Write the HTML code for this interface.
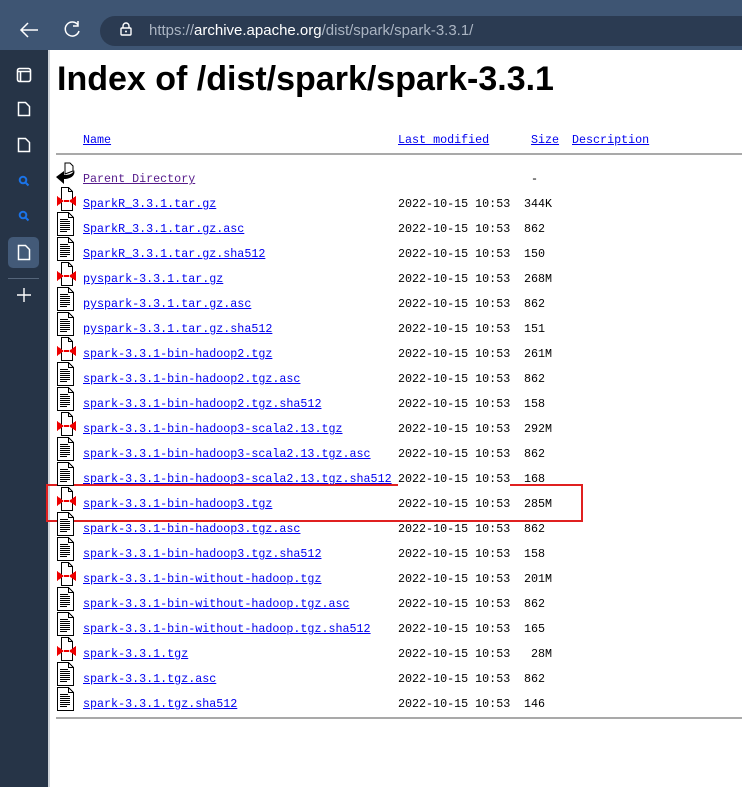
<!DOCTYPE html>
<html><head><meta charset="utf-8"><style>
*{margin:0;padding:0;box-sizing:border-box}
body{width:742px;height:787px;overflow:hidden;background:#fff;position:relative;font-family:"Liberation Mono","Noto Sans CJK SC",monospace;font-size:11.7px}
#top{position:absolute;left:0;top:0;width:742px;height:50px;background:#3e5573}
#url{position:absolute;left:100px;top:16px;width:660px;height:30px;border-radius:15px;background:#2b3b52;color:#aab4c2;font:15px "Liberation Sans",sans-serif;line-height:30px;padding-left:49px}
#url b{font-weight:normal;color:#fff}
#side{position:absolute;left:0;top:50px;width:48px;height:737px;background:#263447}
.r{position:absolute;height:16px;line-height:16px;white-space:pre}
a{color:#0000ee;text-decoration:underline}
a.v{color:#551a8b}
.d{left:398px}
.s{left:500px;width:52px;text-align:right}
.ic{position:absolute;left:56px;width:20px;height:24px;shape-rendering:crispEdges}
hr{position:absolute;left:56px;width:686px;border:0;border-top:2px solid #a9a9a9}
h1{position:absolute;left:57px;top:60px;font:bold 34px "Liberation Sans","DejaVu Sans",sans-serif;color:#000;letter-spacing:0}
</style></head><body>
<div id="top">
<svg style="position:absolute;left:18px;top:20px" width="22" height="20" viewBox="0 0 22 20"><path d="M20 10H3M10 3L3 10l7 7" stroke="#fff" stroke-width="1.5" fill="none"/></svg>
<svg style="position:absolute;left:62px;top:20px" width="20" height="20" viewBox="0 0 20 20"><path d="M16 5A7 7 0 1 0 17 11M16 1v5h-5" stroke="#fff" stroke-width="1.5" fill="none"/></svg>
<div id="url"><b style="position:absolute;left:20px;top:0">
<svg width="12" height="14" viewBox="0 0 12 14" style="vertical-align:-1px"><rect x="1" y="6" width="10" height="7" rx="1" stroke="#fff" stroke-width="1.4" fill="none"/><path d="M3 6V4a3 3 0 0 1 6 0v2" stroke="#fff" stroke-width="1.4" fill="none"/><circle cx="6" cy="9.5" r="1" fill="#fff"/></svg></b>https://<b>archive.apache.org</b>/dist/spark/spark-3.3.1/</div>
</div>
<div id="side">
<svg style="position:absolute;left:16px;top:17px" width="16" height="16"><rect x="1.5" y="1.5" width="13" height="13" rx="2" stroke="#fff" stroke-width="1.6" fill="none"/><path d="M1.5 4.5h13M4.5 4.5v10" stroke="#fff" stroke-width="1.6"/></svg>
<svg style="position:absolute;left:17px;top:51px" width="14" height="16"><path d="M1.5 1.5h7l4 4v9h-11z" stroke="#fff" stroke-width="1.5" fill="none"/></svg>
<svg style="position:absolute;left:17px;top:87px" width="14" height="16"><path d="M1.5 1.5h7l4 4v9h-11z" stroke="#fff" stroke-width="1.5" fill="none"/></svg>
<svg style="position:absolute;left:18px;top:125px" width="12" height="12"><circle cx="5" cy="5" r="3.3" stroke="#1a73e8" stroke-width="2" fill="none"/><path d="M7.5 7.5l3 3" stroke="#1a73e8" stroke-width="2"/></svg>
<svg style="position:absolute;left:18px;top:160px" width="12" height="12"><circle cx="5" cy="5" r="3.3" stroke="#1a73e8" stroke-width="2" fill="none"/><path d="M7.5 7.5l3 3" stroke="#1a73e8" stroke-width="2"/></svg>
<div style="position:absolute;left:8px;top:187px;width:31px;height:31px;border-radius:5px;background:#435a78"></div>
<svg style="position:absolute;left:17px;top:194px" width="14" height="17"><path d="M1.5 1.5h7l4 4v10h-11z" stroke="#fff" stroke-width="1.5" fill="none"/></svg>
<div style="position:absolute;left:8px;top:228px;width:31px;height:1px;background:#55657a"></div>
<svg style="position:absolute;left:16px;top:237px" width="16" height="16"><path d="M8 1v14M1 8h14" stroke="#fff" stroke-width="1.4"/></svg>
</div>
<div style="position:absolute;left:48px;top:50px;width:2px;height:737px;background:#cfd4da"></div>
<h1>Index of /dist/spark/spark-3.3.1</h1>
<div class="r" style="left:83px;top:132px"><a>Name</a></div>
<div class="r" style="left:398px;top:132px"><a>Last modified</a></div>
<div class="r" style="left:531px;top:132px"><a>Size</a></div>
<div class="r" style="left:572px;top:132px"><a>Description</a></div>
<hr style="top:153px">
<svg class="ic" style="top:162px;shape-rendering:auto" viewBox="0 0 20 24"><path d="M9 1h5l3 3v5l-8 3z" fill="#fff" stroke="#000"/><path d="M18 8c2 5-3 9-10 9v5L0 15l8-6v4c5 0 9-1 10-5z" fill="#000"/></svg>
<div class="r" style="left:83px;top:171px"><a class="v">Parent Directory</a></div>
<div class="r s" style="top:171px">-  </div>
<div style="position:absolute;left:46px;top:484px;width:537px;height:38px;border:2px solid #e02020"></div>
<svg width="0" height="0" style="position:absolute"><defs>
<g id="arc"><path d="M5.5 0.5h7l4 4v19h-11z" fill="#fff" stroke="#000"/><path d="M12.5 0.5v4h4" fill="none" stroke="#000"/><path d="M1 9l7 5-7 5zM20 9l-7 5 7 5z" fill="#e00"/><path d="M8 14h5" stroke="#e00" stroke-width="2"/></g>
<g id="txt"><path d="M1.5 0.5h11l5 5v18h-16z" fill="#fff" stroke="#000"/><path d="M12.5 0.5v5h5" fill="none" stroke="#000"/><path d="M4 7.5h8M4 9.5h10M4 11.5h10M4 13.5h10M4 15.5h10M4 17.5h10M4 19.5h7" stroke="#000"/></g>
</defs></svg>
<div id="rows">
<svg class="ic" viewBox="0 0 20 24" style="top:187px"><use href="#arc"/></svg><div class="r" style="left:83px;top:196px"><a>SparkR_3.3.1.tar.gz</a></div><div class="r d" style="top:196px">2022-10-15 10:53</div><div class="r s" style="top:196px">344K</div>
<svg class="ic" viewBox="0 0 20 24" style="top:212px"><use href="#txt"/></svg><div class="r" style="left:83px;top:221px"><a>SparkR_3.3.1.tar.gz.asc</a></div><div class="r d" style="top:221px">2022-10-15 10:53</div><div class="r s" style="top:221px">862 </div>
<svg class="ic" viewBox="0 0 20 24" style="top:237px"><use href="#txt"/></svg><div class="r" style="left:83px;top:246px"><a>SparkR_3.3.1.tar.gz.sha512</a></div><div class="r d" style="top:246px">2022-10-15 10:53</div><div class="r s" style="top:246px">150 </div>
<svg class="ic" viewBox="0 0 20 24" style="top:262px"><use href="#arc"/></svg><div class="r" style="left:83px;top:271px"><a>pyspark-3.3.1.tar.gz</a></div><div class="r d" style="top:271px">2022-10-15 10:53</div><div class="r s" style="top:271px">268M</div>
<svg class="ic" viewBox="0 0 20 24" style="top:287px"><use href="#txt"/></svg><div class="r" style="left:83px;top:296px"><a>pyspark-3.3.1.tar.gz.asc</a></div><div class="r d" style="top:296px">2022-10-15 10:53</div><div class="r s" style="top:296px">862 </div>
<svg class="ic" viewBox="0 0 20 24" style="top:312px"><use href="#txt"/></svg><div class="r" style="left:83px;top:321px"><a>pyspark-3.3.1.tar.gz.sha512</a></div><div class="r d" style="top:321px">2022-10-15 10:53</div><div class="r s" style="top:321px">151 </div>
<svg class="ic" viewBox="0 0 20 24" style="top:337px"><use href="#arc"/></svg><div class="r" style="left:83px;top:346px"><a>spark-3.3.1-bin-hadoop2.tgz</a></div><div class="r d" style="top:346px">2022-10-15 10:53</div><div class="r s" style="top:346px">261M</div>
<svg class="ic" viewBox="0 0 20 24" style="top:362px"><use href="#txt"/></svg><div class="r" style="left:83px;top:371px"><a>spark-3.3.1-bin-hadoop2.tgz.asc</a></div><div class="r d" style="top:371px">2022-10-15 10:53</div><div class="r s" style="top:371px">862 </div>
<svg class="ic" viewBox="0 0 20 24" style="top:387px"><use href="#txt"/></svg><div class="r" style="left:83px;top:396px"><a>spark-3.3.1-bin-hadoop2.tgz.sha512</a></div><div class="r d" style="top:396px">2022-10-15 10:53</div><div class="r s" style="top:396px">158 </div>
<svg class="ic" viewBox="0 0 20 24" style="top:412px"><use href="#arc"/></svg><div class="r" style="left:83px;top:421px"><a>spark-3.3.1-bin-hadoop3-scala2.13.tgz</a></div><div class="r d" style="top:421px">2022-10-15 10:53</div><div class="r s" style="top:421px">292M</div>
<svg class="ic" viewBox="0 0 20 24" style="top:437px"><use href="#txt"/></svg><div class="r" style="left:83px;top:446px"><a>spark-3.3.1-bin-hadoop3-scala2.13.tgz.asc</a></div><div class="r d" style="top:446px">2022-10-15 10:53</div><div class="r s" style="top:446px">862 </div>
<svg class="ic" viewBox="0 0 20 24" style="top:462px"><use href="#txt"/></svg><div class="r" style="left:83px;top:471px"><a>spark-3.3.1-bin-hadoop3-scala2.13.tgz.sha512</a></div><div class="r d" style="top:471px;background:#fff">2022-10-15 10:53</div><div class="r s" style="top:471px">168 </div>
<svg class="ic" viewBox="0 0 20 24" style="top:487px"><use href="#arc"/></svg><div class="r" style="left:83px;top:496px"><a>spark-3.3.1-bin-hadoop3.tgz</a></div><div class="r d" style="top:496px">2022-10-15 10:53</div><div class="r s" style="top:496px">285M</div>
<svg class="ic" viewBox="0 0 20 24" style="top:512px"><use href="#txt"/></svg><div class="r" style="left:83px;top:521px"><a>spark-3.3.1-bin-hadoop3.tgz.asc</a></div><div class="r d" style="top:521px">2022-10-15 10:53</div><div class="r s" style="top:521px">862 </div>
<svg class="ic" viewBox="0 0 20 24" style="top:537px"><use href="#txt"/></svg><div class="r" style="left:83px;top:546px"><a>spark-3.3.1-bin-hadoop3.tgz.sha512</a></div><div class="r d" style="top:546px">2022-10-15 10:53</div><div class="r s" style="top:546px">158 </div>
<svg class="ic" viewBox="0 0 20 24" style="top:562px"><use href="#arc"/></svg><div class="r" style="left:83px;top:571px"><a>spark-3.3.1-bin-without-hadoop.tgz</a></div><div class="r d" style="top:571px">2022-10-15 10:53</div><div class="r s" style="top:571px">201M</div>
<svg class="ic" viewBox="0 0 20 24" style="top:587px"><use href="#txt"/></svg><div class="r" style="left:83px;top:596px"><a>spark-3.3.1-bin-without-hadoop.tgz.asc</a></div><div class="r d" style="top:596px">2022-10-15 10:53</div><div class="r s" style="top:596px">862 </div>
<svg class="ic" viewBox="0 0 20 24" style="top:612px"><use href="#txt"/></svg><div class="r" style="left:83px;top:621px"><a>spark-3.3.1-bin-without-hadoop.tgz.sha512</a></div><div class="r d" style="top:621px">2022-10-15 10:53</div><div class="r s" style="top:621px">165 </div>
<svg class="ic" viewBox="0 0 20 24" style="top:637px"><use href="#arc"/></svg><div class="r" style="left:83px;top:646px"><a>spark-3.3.1.tgz</a></div><div class="r d" style="top:646px">2022-10-15 10:53</div><div class="r s" style="top:646px">28M</div>
<svg class="ic" viewBox="0 0 20 24" style="top:662px"><use href="#txt"/></svg><div class="r" style="left:83px;top:671px"><a>spark-3.3.1.tgz.asc</a></div><div class="r d" style="top:671px">2022-10-15 10:53</div><div class="r s" style="top:671px">862 </div>
<svg class="ic" viewBox="0 0 20 24" style="top:687px"><use href="#txt"/></svg><div class="r" style="left:83px;top:696px"><a>spark-3.3.1.tgz.sha512</a></div><div class="r d" style="top:696px">2022-10-15 10:53</div><div class="r s" style="top:696px">146 </div>
</div>
<hr style="top:717px">
</body></html>
